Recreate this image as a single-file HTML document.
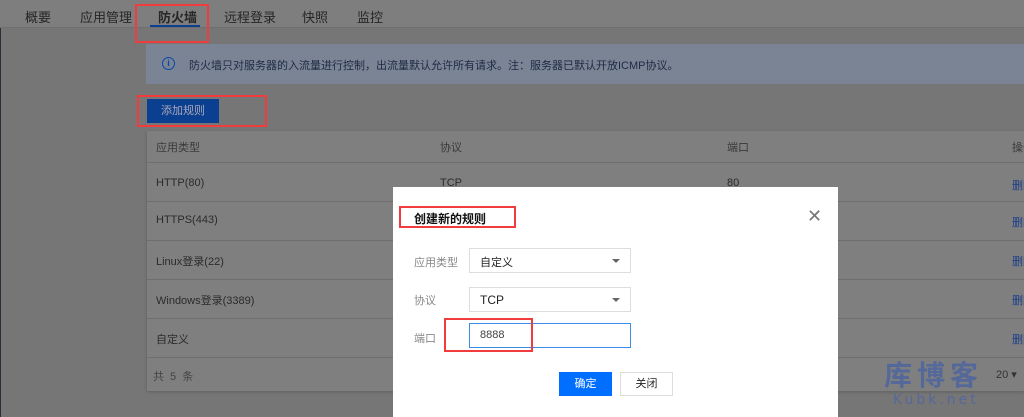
<!DOCTYPE html>
<html style="background:#767676"><head><meta charset="utf-8"><style>
*{margin:0;padding:0;box-sizing:border-box}
html,body{width:1024px;height:417px;overflow:hidden;background:#767676}
body{font-family:"Liberation Sans","Noto Sans CJK SC",sans-serif;font-size:12px;color:#2a2a2a;position:relative}
.a{position:absolute;white-space:nowrap}
.tabs{left:0;top:0;width:1024px;height:28px;background:#7e7e7e;border-bottom:1px solid #6e6e6e}
.tab{top:7px;font-size:13px;color:#262626}
.red{border:2px solid #f03c3c}
.t{font-size:11px;color:#2b2b2b}
.line{left:147px;width:877px;height:1px;background:#6e6e6e}
.del{left:1012px;color:#1b3d8a;font-size:11px}
.lab{left:414px;font-size:11px;color:#888}
.sel{left:469px;width:162px;height:25px;border:1px solid #ddd;background:#fff;font-size:11px;padding:5px 0 0 10px;color:#222}
.arr{position:absolute;right:10px;top:10px;border-left:4px solid transparent;border-right:4px solid transparent;border-top:4px solid #666}
</style></head><body>
<div class="a" style="left:0;top:0;width:1024px;height:417px;background:#767676"></div>
<div class="a" style="left:0;top:0;width:1px;height:417px;background:#2c2c3a"></div>
<div class="a tabs"></div>
<div class="a tab" style="left:25px">概要</div>
<div class="a tab" style="left:80px">应用管理</div>
<div class="a tab" style="left:158px;font-weight:bold">防火墙</div>
<div class="a" style="left:150px;top:25px;width:50px;height:2px;background:#0b3f8f"></div>
<div class="a tab" style="left:224px">远程登录</div>
<div class="a tab" style="left:302px">快照</div>
<div class="a tab" style="left:357px">监控</div>
<div class="a red" style="left:135px;top:4px;width:74px;height:39px"></div>
<div class="a" style="left:146px;top:44px;width:878px;height:40px;background:#7a8494"></div>
<div class="a" style="left:162px;top:57px;width:13px;height:13px;border:1.5px solid #0c46a8;border-radius:50%;font-size:9px;line-height:10px;text-align:center;color:#0c46a8;font-weight:bold">i</div>
<div class="a" style="left:189px;top:57px;font-size:11px;color:#1e2a44">防火墙只对服务器的入流量进行控制，出流量默认允许所有请求。注：服务器已默认开放ICMP协议。</div>
<div class="a" style="left:147px;top:99px;width:72px;height:24px;background:#0b3f8f;color:#aab;font-size:11px;text-align:center;line-height:24px">添加规则</div>
<div class="a red" style="left:137px;top:95px;width:130px;height:32px"></div>
<div class="a" style="left:147px;top:131px;width:877px;height:260px;background:#7f7f7f;box-shadow:0 1px 3px rgba(0,0,0,.2)"></div>
<div class="a t" style="left:156px;top:139px;color:#3a3a3a">应用类型</div>
<div class="a t" style="left:440px;top:139px;color:#3a3a3a">协议</div>
<div class="a t" style="left:727px;top:139px;color:#3a3a3a">端口</div>
<div class="a t" style="left:1012px;top:139px;color:#3a3a3a">操作</div>
<div class="a line" style="top:162px"></div>
<div class="a t" style="left:156px;top:177px">HTTP(80)</div><div class="a t" style="left:440px;top:177px">TCP</div><div class="a t" style="left:727px;top:177px">80</div><div class="a del" style="top:177px">删除</div>
<div class="a line" style="top:201px"></div>
<div class="a t" style="left:156px;top:214px">HTTPS(443)</div><div class="a del" style="top:214px">删除</div>
<div class="a line" style="top:240px"></div>
<div class="a t" style="left:156px;top:253px">Linux登录(22)</div><div class="a del" style="top:253px">删除</div>
<div class="a line" style="top:279px"></div>
<div class="a t" style="left:156px;top:292px">Windows登录(3389)</div><div class="a del" style="top:292px">删除</div>
<div class="a line" style="top:318px"></div>
<div class="a t" style="left:156px;top:331px">自定义</div><div class="a del" style="top:331px">删除</div>
<div class="a line" style="top:357px"></div>
<div class="a t" style="left:153px;top:368px;color:#444;word-spacing:3px">共 5 条</div>
<div class="a t" style="left:996px;top:368px;color:#333">20 ▾</div>
<div class="a" style="left:884px;top:358px;font-size:28px;font-weight:bold;color:#55689a;letter-spacing:5px;font-family:'Noto Sans CJK SC',sans-serif;line-height:32px">库博客</div>
<div class="a" style="left:893px;top:392px;font-size:14px;color:#55689a;letter-spacing:3px;font-family:'DejaVu Sans',sans-serif">Kubk.net</div>
<div class="a" style="left:393px;top:187px;width:445px;height:230px;background:#fff"></div>
<div class="a" style="left:414px;top:210px;font-size:12px;font-weight:bold;color:#111">创建新的规则</div>
<div class="a red" style="left:399px;top:206px;width:117px;height:22px"></div>
<div class="a" style="left:807px;top:206px;font-size:18px;color:#777;font-family:'DejaVu Sans'">✕</div>
<div class="a lab" style="top:254px">应用类型</div>
<div class="a sel" style="top:248px">自定义<span class="arr"></span></div>
<div class="a lab" style="top:292px">协议</div>
<div class="a sel" style="top:287px;font-size:12px">TCP<span class="arr"></span></div>
<div class="a lab" style="top:330px">端口</div>
<div class="a sel" style="top:323px;border-color:#3b8ce8;color:#444">8888</div>
<div class="a red" style="left:444px;top:318px;width:89px;height:34px"></div>
<div class="a" style="left:559px;top:372px;width:53px;height:24px;background:#006eff;color:#fff;font-size:11px;text-align:center;line-height:24px">确定</div>
<div class="a" style="left:620px;top:372px;width:53px;height:24px;border:1px solid #ddd;color:#222;font-size:11px;text-align:center;line-height:22px">关闭</div>
</body></html>
